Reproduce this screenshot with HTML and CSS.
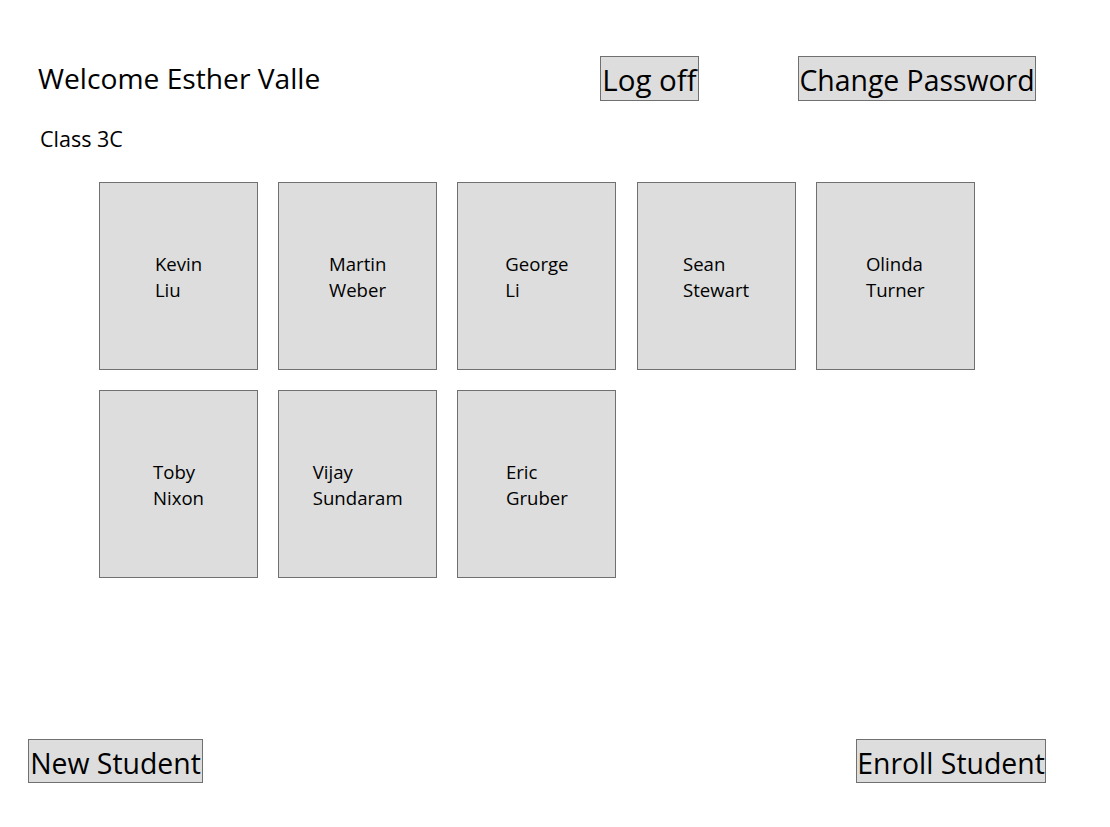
FILE: index.html
```html
<!DOCTYPE html>
<html lang="en">
<head>
<meta charset="utf-8">
<title>Class 3C</title>
<link rel="stylesheet" href="styles.css">
</head>
<body>
<div class="page">
  <header class="top">
    <h1 class="welcome">Welcome Esther Valle</h1>
    <button class="btn btn-logoff">Log off</button>
    <button class="btn btn-password">Change Password</button>
  </header>
  <div class="class-name">Class 3C</div>
  <div class="tiles">
    <div class="tile"><div class="name">Kevin<br>Liu</div></div>
    <div class="tile"><div class="name">Martin<br>Weber</div></div>
    <div class="tile"><div class="name">George<br>Li</div></div>
    <div class="tile"><div class="name">Sean<br>Stewart</div></div>
    <div class="tile"><div class="name">Olinda<br>Turner</div></div>
    <div class="tile"><div class="name">Toby<br>Nixon</div></div>
    <div class="tile"><div class="name">Vijay<br>Sundaram</div></div>
    <div class="tile"><div class="name">Eric<br>Gruber</div></div>
  </div>
  <footer class="bottom">
    <button class="btn btn-new">New Student</button>
    <button class="btn btn-enroll">Enroll Student</button>
  </footer>
</div>
</body>
</html>
```
FILE: styles.css
```css
* { box-sizing: border-box; }
html, body { margin: 0; padding: 0; background: #ffffff; }
body {
  font-family: "Open Sans", "Noto Sans", "Liberation Sans", sans-serif;
  color: #000;
}
.page {
  height: 827px;
  display: flex;
  flex-direction: column;
}
.top {
  display: flex;
  align-items: center;
  padding: 56px 0 0 38px;
}
.welcome {
  margin: 0;
  width: 562px;
  font-size: 28.2px;
  font-weight: 400;
  line-height: 45px;
}
.btn {
  font-family: inherit;
  font-size: 28.4px;
  color: #000;
  background: #dddddd;
  border: 1px solid #707070;
  border-radius: 0;
  height: 45px;
  padding: 3px 0 0 0;
  margin: 0;
  display: inline-flex;
  align-items: center;
  justify-content: center;
  white-space: nowrap;
  line-height: 1;
}
.btn-logoff { width: 99px; font-size: 29.5px; }
.btn-password { width: 238px; margin-left: 99px; }
.class-name {
  margin: 24px 0 0 40px;
  font-size: 21.5px;
  line-height: 28px;
}
.tiles {
  display: grid;
  grid-template-columns: repeat(5, 159px);
  grid-auto-rows: 188px;
  column-gap: 20.2px;
  row-gap: 20px;
  padding-left: 99px;
  margin-top: 29px;
}
.tile {
  background: #dddddd;
  border: 1px solid #707070;
  display: flex;
  align-items: center;
  justify-content: center;
}
.name {
  font-size: 18.6px;
  line-height: 26px;
  text-align: left;
  padding-top: 2px;
}
.bottom {
  margin-top: auto;
  display: flex;
  justify-content: space-between;
  padding: 0 64px 44px 28px;
}
.bottom .btn { height: 44px; padding-top: 4px; }
.btn-new { width: 175px; }
.btn-enroll { width: 190px; }
```
